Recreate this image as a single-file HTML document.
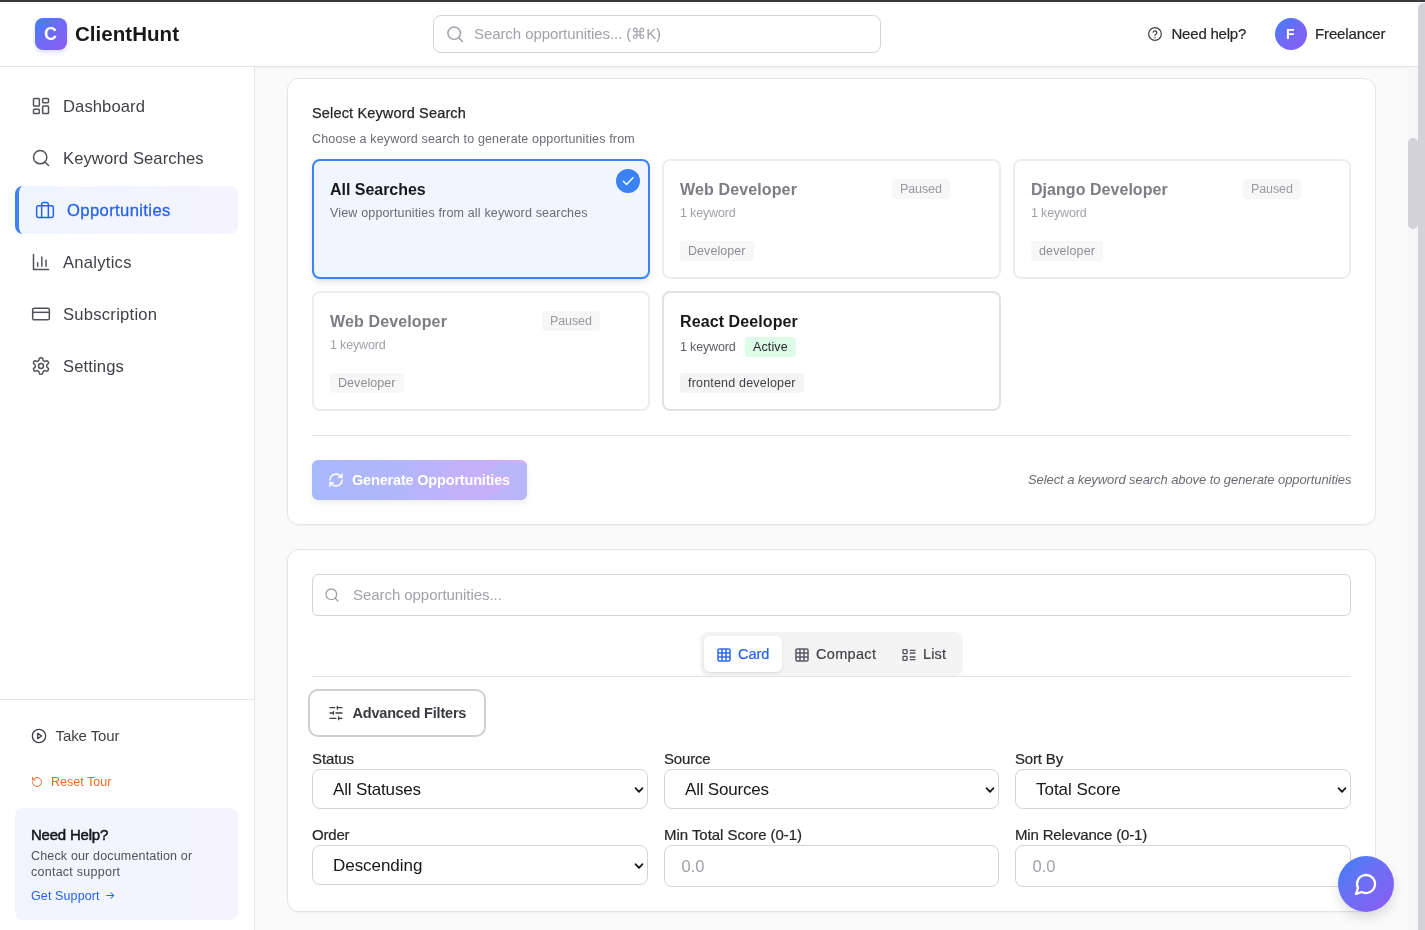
<!DOCTYPE html>
<html lang="en">
<head>
<meta charset="utf-8">
<title>ClientHunt - Opportunities</title>
<style>
*{box-sizing:border-box;margin:0;padding:0}
html,body{width:1425px;height:930px;overflow:hidden;background:#fafafa}
body{font-family:"Liberation Sans",sans-serif;color:#18181b;position:relative}
.abs{position:absolute}
.t{position:absolute;white-space:nowrap;line-height:1}
svg{display:block}
#topline{left:0;top:0;width:1425px;height:2px;background:#3a3a3e}
#header{left:0;top:2px;width:1418px;height:65px;background:#fff;border-bottom:1px solid #e4e4e7;box-shadow:0 1px 2px rgba(0,0,0,.04)}
#logo{left:35px;top:18px;width:32px;height:32px;border-radius:8px;background:linear-gradient(135deg,#3b82f6 0%,#7169f5 50%,#8b5cf6 100%);box-shadow:0 2px 4px rgba(99,102,241,.25)}
#hsearch{left:433px;top:15px;width:448px;height:38px;border:1px solid #d4d4d8;border-radius:8px;background:#fff}
#avatar{left:1275px;top:18px;width:32px;height:32px;border-radius:50%;background:linear-gradient(135deg,#3b82f6 0%,#7169f5 50%,#8b5cf6 100%)}
#sidebar{left:0;top:67px;width:255px;height:863px;background:#fff;border-right:1px solid #e4e4e7}
.nav{position:absolute;left:63px;font-size:16.6px;color:#3f3f46;white-space:nowrap;line-height:1}
.nico{position:absolute;left:31px;width:20px;height:20px;color:#52525b}
#active{left:15px;top:186px;width:223px;height:48px;border-radius:8px;border-left:4px solid #3b82f6;background:linear-gradient(90deg,#eff6ff 0%,#f5f3ff 100%)}
#sbline{left:0;top:699px;width:254px;height:1px;background:#e4e4e7}
#helpbox{left:15px;top:808px;width:223px;height:112px;border-radius:8px;background:linear-gradient(90deg,#eff6ff 0%,#f5f3ff 100%)}
#sb-outer{left:1418px;top:3px;width:7px;height:927px;background:#d2d2d7;border-radius:6px 0 0 0}
#sb-track{left:1408px;top:67px;width:10px;height:863px;background:#f6f6f7}
#sb-thumb{left:1408px;top:138px;width:10px;height:91px;background:#d2d2d7;border-radius:5px}
.card{position:absolute;background:#fff;border:1px solid #e4e4e7;border-radius:12px;box-shadow:0 1px 2px rgba(0,0,0,.04)}
.kc{position:absolute;width:338px;height:120px;border:2px solid #e4e4e7;border-radius:8px;background:#fff}
.kc.p{border-color:#ededef}
.kt{position:absolute;left:16px;top:21px;font-size:16px;font-weight:700;line-height:1;white-space:nowrap;color:#18181b}
.ks{position:absolute;left:16px;top:46px;font-size:12.5px;line-height:1;white-space:nowrap;color:#6b6b74}
.tag{position:absolute;left:16px;top:80px;height:20px;padding:0 8px;border-radius:4px;background:#f4f4f5;font-size:12.5px;line-height:20px;white-space:nowrap;color:#3f3f46}
.badge{position:absolute;top:18px;height:20px;padding:0 8px;border-radius:4px;background:#f4f4f5;font-size:12.5px;line-height:20px;white-space:nowrap;color:#52525b}
.p .kt{color:#7c7c84}.p .ks{color:#a1a1aa}.p .tag{color:#8e8e96;background:#f7f7f8}.p .badge{color:#9a9aa2;background:#f7f7f8}
.lbl{position:absolute;font-size:15px;line-height:1;color:#27272a;white-space:nowrap;-webkit-text-stroke:.2px #27272a}
.sel{position:absolute;height:40px;border:1px solid #d4d4d8;border-radius:8px;background:#fff}
.sel span{position:absolute;left:20px;top:11px;font-size:17px;line-height:1;color:#18181b;white-space:nowrap}
.sel svg{position:absolute;right:2px;top:14px}
.inp{position:absolute;height:42px;border:1px solid #d4d4d8;border-radius:8px;background:#fff}
.inp span{position:absolute;left:16.5px;top:12px;font-size:16.5px;line-height:1;color:#a1a1aa}
</style>
</head>
<body>
<div id="wrap" style="position:absolute;left:0;top:0;width:1425px;height:930px;will-change:transform">
<div class="abs" id="topline"></div>
<div class="abs" id="header"></div>
<div class="abs" id="logo"></div>
<div class="t" style="left:44px;top:25px;font-size:18px;font-weight:700;color:#fff">C</div>
<div class="t" id="t_brand" style="left:75px;top:24px;font-size:20.5px;font-weight:700;color:#18181b;letter-spacing:0.037px">ClientHunt</div>
<div class="abs" id="hsearch"></div>
<svg class="abs" style="left:445px;top:24px" width="20" height="20" viewBox="0 0 24 24" fill="none" stroke="#a1a1aa" stroke-width="1.8" stroke-linecap="round"><circle cx="11" cy="11" r="7.5"/><path d="M16.5 16.5L21 21"/></svg>
<div class="t" id="t_hs" style="left:474px;top:26px;font-size:15px;color:#a1a1aa;letter-spacing:-0.081px">Search opportunities... (⌘K)</div>
<svg class="abs" style="left:1147px;top:26px" width="16" height="16" viewBox="0 0 24 24" fill="none" stroke="#3f3f46" stroke-width="1.8" stroke-linecap="round" stroke-linejoin="round"><circle cx="12" cy="12" r="9.5"/><path d="M9.2 9.2a2.9 2.9 0 0 1 5.6 1c0 1.9-2.8 2.4-2.8 3.800"/><path d="M12 17.2v.1"/></svg>
<div class="t" id="t_nh" style="left:1171.5px;top:26px;font-size:15px;color:#27272a;-webkit-text-stroke:.2px #27272a;letter-spacing:-0.213px">Need help?</div>
<div class="abs" id="avatar"></div>
<div class="t" style="left:1286px;top:27px;font-size:14px;font-weight:700;color:#fff">F</div>
<div class="t" id="t_fl" style="left:1315px;top:26px;font-size:15px;color:#27272a;-webkit-text-stroke:.2px #27272a;letter-spacing:-0.130px">Freelancer</div>

<div class="abs" id="sidebar"></div>
<div class="abs" id="active"></div>
<div class="abs" id="sbline"></div>
<div class="abs" id="helpbox"></div>

<!-- card 1 -->
<div class="card" style="left:287px;top:78px;width:1089px;height:447px"></div>
<div class="t" id="t_sks" style="left:312px;top:106px;font-size:14.5px;color:#27272a;-webkit-text-stroke:.25px #27272a;letter-spacing:0.156px">Select Keyword Search</div>
<div class="t" id="t_cks" style="left:312px;top:133px;font-size:12.5px;color:#6b6b74;letter-spacing:0.149px">Choose a keyword search to generate opportunities from</div>

<div class="kc" style="left:312px;top:159px;border-color:#3b82f6;background:#eff6ff;box-shadow:0 4px 8px -2px rgba(0,0,0,.12),0 2px 4px -2px rgba(0,0,0,.08)">
  <div class="kt" id="t_as" style="letter-spacing:-0.030px">All Searches</div>
  <div class="ks" id="t_vo" style="font-size:12.5px;letter-spacing:0.162px">View opportunities from all keyword searches</div>
</div>
<div class="abs" style="left:616px;top:169px;width:24px;height:24px;border-radius:50%;background:#3b82f6"></div>
<svg class="abs" style="left:621px;top:173.500px" width="14" height="14" viewBox="0 0 24 24" fill="none" stroke="#fff" stroke-width="2.5" stroke-linecap="round" stroke-linejoin="round"><path d="M4 12.5l5.5 5.5L20.5 6.5"/></svg>

<div class="kc p" style="left:662px;top:159px;width:339px"><div class="kt" id="t_wd1" style="letter-spacing:0.131px">Web Developer</div><div class="ks" id="t_k1" style="letter-spacing:-0.154px">1 keyword</div><div class="tag" id="t_tg1" style="letter-spacing:0.057px">Developer</div><div class="badge" id="t_pa1" style="left:228px;letter-spacing:-0.101px">Paused</div></div>
<div class="kc p" style="left:1013px;top:159px"><div class="kt" id="t_dd" style="letter-spacing:0.042px">Django Developer</div><div class="ks" id="t_k2" style="letter-spacing:-0.154px">1 keyword</div><div class="tag" id="t_tg2" style="letter-spacing:0.122px">developer</div><div class="badge" id="t_pa2" style="left:228px;letter-spacing:-0.101px">Paused</div></div>
<div class="kc p" style="left:312px;top:291px"><div class="kt" id="t_wd2" style="letter-spacing:0.131px">Web Developer</div><div class="ks" id="t_k3" style="letter-spacing:-0.154px">1 keyword</div><div class="tag" id="t_tg3" style="letter-spacing:0.057px">Developer</div><div class="badge" id="t_pa3" style="left:228px;letter-spacing:-0.101px">Paused</div></div>
<div class="kc" style="left:662px;top:291px;width:339px;border-color:#e2e2e5"><div class="kt" id="t_rd" style="letter-spacing:0.100px">React Deeloper</div><div class="ks" id="t_k4" style="top:48px;color:#5c5c66;letter-spacing:-0.154px">1 keyword</div><div class="badge" id="t_ac" style="left:81px;top:44px;background:#dcfce7;color:#27272a;letter-spacing:0.126px">Active</div><div class="tag" id="t_tg4" style="letter-spacing:0.192px">frontend developer</div></div>

<div class="abs" style="left:312px;top:435px;width:1039px;height:1px;background:#e4e4e7"></div>
<div class="abs" style="left:312px;top:460px;width:215px;height:40px;border-radius:6px;overflow:hidden;background:linear-gradient(90deg,#a8b9fb 0%,#b2b6fb 40%,#c3b1fb 70%,#cdaffb 100%);box-shadow:0 3px 6px rgba(0,0,0,.07)"><svg width="215" height="40" viewBox="0 0 215 40" shape-rendering="crispEdges"><defs><pattern id="chk" width="2" height="2" patternUnits="userSpaceOnUse"><rect width="2" height="2" fill="#ccb0fb"/><rect width="1" height="1" fill="#a6bcfb"/><rect x="1" y="1" width="1" height="1" fill="#a6bcfb"/></pattern></defs><path d="M187.700 3L177 10v4.500c8 0 14 0 22.300 1.500v9.500L197 26 177.400 37.500V40H215V3z" fill="url(#chk)"/></svg></div>
<svg class="abs" style="left:328px;top:472px" width="16" height="16" viewBox="0 0 24 24" fill="none" stroke="#fff" stroke-width="2.2" stroke-linecap="round" stroke-linejoin="round"><path d="M3 12a9 9 0 0 1 9-9 9.750 9.750 0 0 1 6.740 2.740L21 8"/><path d="M21 3v5h-5"/><path d="M21 12a9 9 0 0 1-9 9 9.750 9.750 0 0 1-6.740-2.740L3 16"/><path d="M8 16H3v5"/></svg>
<div class="t" id="t_go" style="left:352px;top:473px;font-size:14.5px;font-weight:700;color:#fff;letter-spacing:-0.180px">Generate Opportunities</div>
<div class="t" id="t_sel" style="left:1028px;top:473px;font-size:13px;font-style:italic;color:#6b6b74;letter-spacing:-0.087px">Select a keyword search above to generate opportunities</div>

<!-- card 2 -->
<div class="card" style="left:287px;top:549px;width:1089px;height:363px"></div>
<div class="abs" style="left:312px;top:574px;width:1039px;height:42px;border:1px solid #d4d4d8;border-radius:6px;background:#fff"></div>
<svg class="abs" style="left:324px;top:587px" width="16" height="16" viewBox="0 0 24 24" fill="none" stroke="#a1a1aa" stroke-width="2" stroke-linecap="round"><circle cx="11" cy="11" r="8"/><path d="M16.8 16.8L21 21"/></svg>
<div class="t" id="t_so" style="left:353px;top:587px;font-size:15px;color:#a1a1aa;letter-spacing:-0.056px">Search opportunities...</div>

<div class="abs" style="left:700px;top:632px;width:263px;height:44px;border-radius:8px;background:#f4f4f5"></div>
<div class="abs" style="left:704px;top:636px;width:78px;height:36px;border-radius:6px;background:#fff;box-shadow:0 1px 3px rgba(0,0,0,.1)"></div>
<svg class="abs" style="left:716px;top:647px" width="16" height="16" viewBox="0 0 24 24" fill="none" stroke="#2f6bf0" stroke-width="2.3" stroke-linejoin="round"><rect x="3" y="3" width="18" height="18" rx="2"/><path d="M3 9h18M3 15h18M9 3v18M15 3v18"/></svg>
<div class="t" id="t_card" style="left:738px;top:647px;font-size:14.5px;color:#2563eb;-webkit-text-stroke:.2px #2563eb;letter-spacing:-0.034px">Card</div>
<svg class="abs" style="left:794px;top:647px" width="16" height="16" viewBox="0 0 24 24" fill="none" stroke="#5a5a63" stroke-width="2.3" stroke-linejoin="round"><rect x="3" y="3" width="18" height="18" rx="2"/><path d="M3 9h18M3 15h18M9 3v18M15 3v18"/></svg>
<div class="t" id="t_comp" style="left:816px;top:647px;font-size:14.5px;color:#3f3f46;-webkit-text-stroke:.2px #3f3f46;letter-spacing:0.324px">Compact</div>
<svg class="abs" style="left:901px;top:647px" width="16" height="16" viewBox="0 0 24 24" fill="none" stroke="#52525b" stroke-width="2" stroke-linejoin="round" stroke-linecap="round"><rect x="3" y="4" width="6" height="6" rx="1"/><rect x="3" y="14" width="6" height="6" rx="1"/><path d="M14 5h7M14 9h7M14 15h7M14 19h7"/></svg>
<div class="t" id="t_list" style="left:923px;top:647px;font-size:14.5px;color:#3f3f46;-webkit-text-stroke:.2px #3f3f46;letter-spacing:0.155px">List</div>
<div class="abs" style="left:312px;top:676px;width:1039px;height:1px;background:#e4e4e7"></div>

<div class="abs" style="left:308px;top:689px;width:178px;height:48px;border-radius:10px;border:2px solid #cfcfd6;background:#fff"></div>
<svg class="abs" style="left:328px;top:705px" width="16" height="16" viewBox="0 0 24 24" fill="none" stroke="#3f3f46" stroke-width="2" stroke-linecap="round"><path d="M21 4h-7M10 4H3M21 12h-9M8 12H3M21 20h-5M12 20H3M14 2v4M8 10v4M16 18v4"/></svg>
<div class="t" id="t_af" style="left:352.5px;top:706px;font-size:14.5px;font-weight:700;color:#3a3a42;letter-spacing:-0.196px">Advanced Filters</div>

<div class="lbl" id="t_st" style="left:312px;top:751px;letter-spacing:-0.122px">Status</div>
<div class="lbl" id="t_src" style="left:664px;top:751px;letter-spacing:-0.172px">Source</div>
<div class="lbl" id="t_sb" style="left:1015px;top:751px;letter-spacing:-0.170px">Sort By</div>
<div class="sel" style="left:312px;top:769px;width:336px"><span id="t_ast" style="letter-spacing:-0.155px">All Statuses</span><svg width="12" height="12" viewBox="0 0 12 12" fill="none" stroke="#18181b" stroke-width="1.8" stroke-linecap="round" stroke-linejoin="round"><path d="M2.5 4.2L6 7.8l3.500-3.600"/></svg></div>
<div class="sel" style="left:664px;top:769px;width:335px"><span id="t_aso" style="letter-spacing:-0.199px">All Sources</span><svg width="12" height="12" viewBox="0 0 12 12" fill="none" stroke="#18181b" stroke-width="1.8" stroke-linecap="round" stroke-linejoin="round"><path d="M2.5 4.2L6 7.8l3.500-3.600"/></svg></div>
<div class="sel" style="left:1015px;top:769px;width:336px"><span id="t_ts" style="letter-spacing:-0.032px">Total Score</span><svg width="12" height="12" viewBox="0 0 12 12" fill="none" stroke="#18181b" stroke-width="1.8" stroke-linecap="round" stroke-linejoin="round"><path d="M2.5 4.2L6 7.8l3.500-3.600"/></svg></div>
<div class="lbl" id="t_or" style="left:312px;top:827px;letter-spacing:-0.209px">Order</div>
<div class="lbl" id="t_mts" style="left:664px;top:827px;letter-spacing:-0.045px">Min Total Score (0-1)</div>
<div class="lbl" id="t_mr" style="left:1015px;top:827px;letter-spacing:-0.161px">Min Relevance (0-1)</div>
<div class="sel" style="left:312px;top:845px;width:336px"><span id="t_desc" style="letter-spacing:-0.048px">Descending</span><svg width="12" height="12" viewBox="0 0 12 12" fill="none" stroke="#18181b" stroke-width="1.8" stroke-linecap="round" stroke-linejoin="round"><path d="M2.5 4.2L6 7.8l3.500-3.600"/></svg></div>
<div class="inp" style="left:664px;top:845px;width:335px"><span id="t_z1" style="letter-spacing:0.021px">0.0</span></div>
<div class="inp" style="left:1015px;top:845px;width:336px"><span id="t_z2" style="letter-spacing:0.021px">0.0</span></div>

<!-- fab -->
<div class="abs" style="left:1338px;top:856px;width:56px;height:56px;border-radius:50%;background:linear-gradient(135deg,#3b82f6 0%,#6d6ff3 45%,#8b5cf6 100%);box-shadow:0 6px 12px rgba(0,0,0,.12)"></div>
<svg class="abs" style="left:1354px;top:872px" width="24" height="24" viewBox="0 0 24 24" fill="none" stroke="#fff" stroke-width="2.3" stroke-linecap="round" stroke-linejoin="round"><path d="M7.9 20A9 9 0 1 0 4 16.1L2 22Z"/></svg>

<!-- sidebar nav -->
<svg class="nico" style="top:96px" viewBox="0 0 24 24" fill="none" stroke="currentColor" stroke-width="1.8" stroke-linejoin="round"><rect x="3" y="3" width="7" height="9" rx="1"/><rect x="14" y="3" width="7" height="5" rx="1"/><rect x="14" y="12" width="7" height="9" rx="1"/><rect x="3" y="16" width="7" height="5" rx="1"/></svg>
<div class="nav" id="t_n1" style="top:99px;letter-spacing:0.090px">Dashboard</div>
<svg class="nico" style="top:148px" viewBox="0 0 24 24" fill="none" stroke="currentColor" stroke-width="1.8" stroke-linecap="round"><circle cx="11" cy="11" r="8"/><path d="M16.8 16.8L21 21"/></svg>
<div class="nav" id="t_n2" style="top:151px;letter-spacing:0.089px">Keyword Searches</div>
<svg class="nico" style="top:200px;left:35px;color:#2563eb" viewBox="0 0 24 24" fill="none" stroke="currentColor" stroke-width="1.8" stroke-linejoin="round" stroke-linecap="round"><rect x="2" y="7" width="20" height="14" rx="2"/><path d="M8 21V5a2 2 0 0 1 2-2h4a2 2 0 0 1 2 2v16"/></svg>
<div class="nav" id="t_n3" style="top:203px;left:67px;color:#2563eb;-webkit-text-stroke:.3px #2563eb;letter-spacing:0.384px">Opportunities</div>
<svg class="nico" style="top:252px" viewBox="0 0 24 24" fill="none" stroke="currentColor" stroke-width="1.8" stroke-linecap="round" stroke-linejoin="round"><path d="M3 3v18h18"/><path d="M8 17v-4"/><path d="M13 17V6"/><path d="M18 17V10"/></svg>
<div class="nav" id="t_n4" style="top:255px;letter-spacing:0.255px">Analytics</div>
<svg class="nico" style="top:304px" viewBox="0 0 24 24" fill="none" stroke="currentColor" stroke-width="1.8" stroke-linejoin="round"><rect x="2" y="5" width="20" height="14" rx="2"/><path d="M2 10h20"/></svg>
<div class="nav" id="t_n5" style="top:307px;letter-spacing:0.248px">Subscription</div>
<svg class="nico" style="top:356px" viewBox="0 0 24 24" fill="none" stroke="currentColor" stroke-width="1.8" stroke-linejoin="round" stroke-linecap="round"><path d="M12.22 2h-.44a2 2 0 0 0-2 2v.18a2 2 0 0 1-1 1.73l-.43.25a2 2 0 0 1-2 0l-.15-.08a2 2 0 0 0-2.73.73l-.22.38a2 2 0 0 0 .73 2.73l.15.1a2 2 0 0 1 1 1.72v.51a2 2 0 0 1-1 1.74l-.15.09a2 2 0 0 0-.73 2.73l.22.38a2 2 0 0 0 2.73.73l.15-.08a2 2 0 0 1 2 0l.43.25a2 2 0 0 1 1 1.73V20a2 2 0 0 0 2 2h.44a2 2 0 0 0 2-2v-.18a2 2 0 0 1 1-1.73l.43-.25a2 2 0 0 1 2 0l.15.08a2 2 0 0 0 2.73-.73l.22-.39a2 2 0 0 0-.73-2.73l-.15-.08a2 2 0 0 1-1-1.74v-.5a2 2 0 0 1 1-1.74l.15-.09a2 2 0 0 0 .73-2.73l-.22-.38a2 2 0 0 0-2.73-.73l-.15.08a2 2 0 0 1-2 0l-.43-.25a2 2 0 0 1-1-1.73V4a2 2 0 0 0-2-2z"/><circle cx="12" cy="12" r="3"/></svg>
<div class="nav" id="t_n6" style="top:359px;letter-spacing:0.129px">Settings</div>

<svg class="abs" style="left:31px;top:728px;color:#3f3f46" width="16" height="16" viewBox="0 0 24 24" fill="none" stroke="currentColor" stroke-width="2" stroke-linejoin="round"><circle cx="12" cy="12" r="10"/><path d="M10 8l6 4-6 4z"/></svg>
<div class="t" id="t_tt" style="left:55.5px;top:728px;font-size:15px;color:#3f3f46;letter-spacing:-0.085px">Take Tour</div>
<svg class="abs" style="left:31px;top:776px;color:#ea6a2a" width="12" height="12" viewBox="0 0 24 24" fill="none" stroke="currentColor" stroke-width="2" stroke-linecap="round" stroke-linejoin="round"><path d="M3 12a9 9 0 1 0 9-9 9.750 9.750 0 0 0-6.740 2.740L3 8"/><path d="M3 3v5h5"/></svg>
<div class="t" id="t_rt" style="left:51px;top:776px;font-size:12.5px;color:#ea6a2a;letter-spacing:0.008px">Reset Tour</div>
<div class="t" id="t_nhh" style="left:31px;top:827px;font-size:15px;font-weight:400;color:#18181b;-webkit-text-stroke:.5px #18181b;letter-spacing:-0.222px">Need Help?</div>
<div class="t" id="t_cod" style="left:31px;top:850px;font-size:12.5px;color:#52525b;letter-spacing:0.164px">Check our documentation or</div>
<div class="t" id="t_cs" style="left:31px;top:866px;font-size:12.5px;color:#52525b;letter-spacing:0.255px">contact support</div>
<div class="t" id="t_gs" style="left:31px;top:890px;font-size:12.5px;color:#2563eb;letter-spacing:0.118px">Get Support</div>
<svg class="abs" style="left:105px;top:890px" width="11" height="11" viewBox="0 0 24 24" fill="none" stroke="#2563eb" stroke-width="2.2" stroke-linecap="round" stroke-linejoin="round"><path d="M4 12h15M13 6l6 6-6 6"/></svg>

<div class="abs" id="sb-track"></div>
<div class="abs" id="sb-thumb"></div>
<div class="abs" id="sb-outer"></div>

</div>
</body>
</html>
